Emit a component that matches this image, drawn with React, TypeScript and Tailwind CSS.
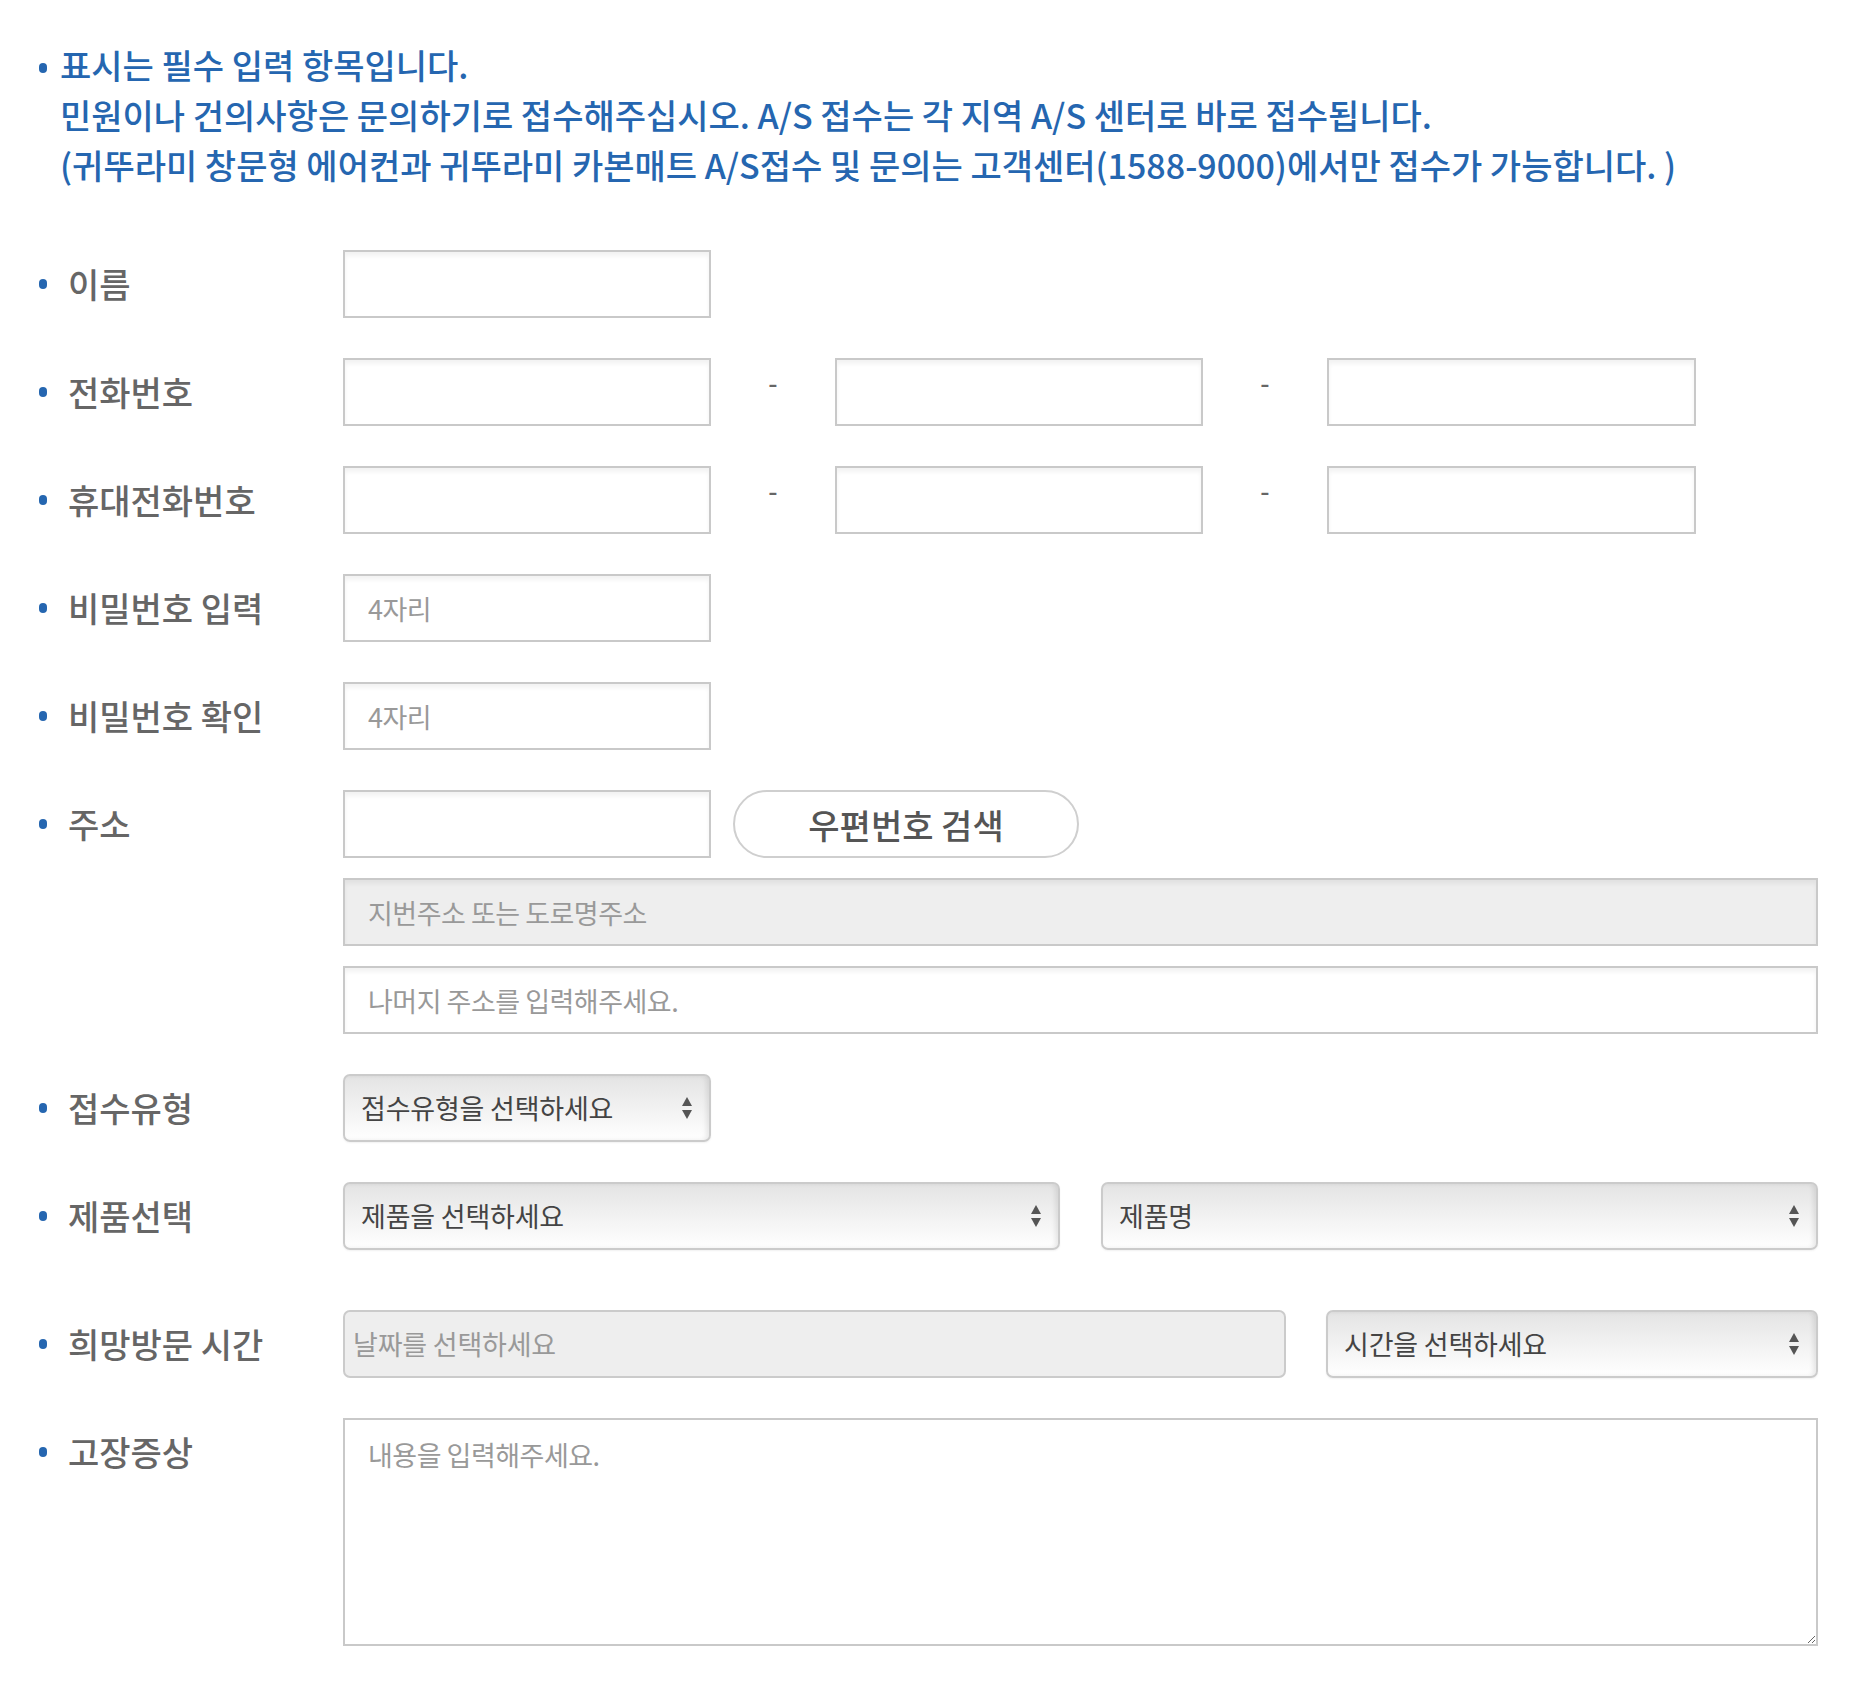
import React from 'react';

const labelDot = 'inline-block w-[8px] h-[10px] rounded-full bg-[#2566b0] shrink-0';
const inputBase =
    'h-[68px] border-2 border-[#c9c9c9] px-[23px] text-[27px] tracking-[-0.5px] text-[#444] placeholder:text-[#999] shadow-[inset_0_4px_4px_rgba(0,0,0,0.05)] outline-none';
const selectBase =
    'relative h-[68px] rounded-[7px] border-2 border-[#cbcbcb] bg-linear-to-b from-[#e4e4e4] to-[#ffffff] shadow-[inset_-3px_0_4px_rgba(0,0,0,0.08),0_1px_2px_rgba(0,0,0,0.06)]';

const Arrows = () => (
    <svg className="absolute right-[16px] top-1/2 -translate-y-1/2" width="12" height="26" viewBox="0 0 12 26">
        <path d="M6 2 L11 11 L1 11 Z" fill="#555" />
        <path d="M1 15 L11 15 L6 24 Z" fill="#555" />
    </svg>
);

const FakeSelect = ({ text, className }: { text: string; className: string }) => (
    <div className={`${selectBase} ${className}`}>
        <div className="flex h-full items-center pl-[16px] text-[27px] tracking-[-0.2px] text-[#444]">{text}</div>
        <Arrows />
    </div>
);

const Row = ({ label, children, top }: { label: string; children: React.ReactNode; top?: boolean }) => (
    <div className={`flex ${top ? 'items-start' : 'items-center'}`}>
        <div className={`w-[304px] shrink-0 flex items-center ${top ? 'h-[68px]' : ''}`}>
            <span className={labelDot} />
            <span className="ml-[21px] text-[34px] font-medium text-[#666] leading-none">{label}</span>
        </div>
        {children}
    </div>
);

const Dash = () => (
    <div className="w-[124px] shrink-0 flex justify-center -mt-[22px] text-[26px] font-medium text-[#666]">-</div>
);

export default function App() {
    return (
        <div className="min-h-[1682px] w-full bg-white pl-[39px] pt-[40px] pb-[36px] font-['Noto_Sans_CJK_KR','Noto_Sans',sans-serif]">
            <div className="flex text-[34px] font-medium leading-[50px] text-[#2566b0]">
                <div className="w-[21px] shrink-0 h-[50px] flex items-center pt-[6px]">
                    <span className={labelDot} />
                </div>
                <div>
                    <p>표시는 필수 입력 항목입니다.</p>
                    <p>민원이나 건의사항은 문의하기로 접수해주십시오. A/S 접수는 각 지역 A/S 센터로 바로 접수됩니다.</p>
                    <p>(귀뚜라미 창문형 에어컨과 귀뚜라미 카본매트 A/S접수 및 문의는 고객센터(1588-9000)에서만 접수가 가능합니다. )</p>
                </div>
            </div>

            <div className="mt-[60px] flex flex-col gap-[40px]">
                <Row label="이름">
                    <input className={`${inputBase} bg-white w-[368px]`} />
                </Row>
                <Row label="전화번호">
                    <input className={`${inputBase} bg-white w-[368px]`} />
                    <Dash />
                    <input className={`${inputBase} bg-white w-[368px]`} />
                    <Dash />
                    <input className={`${inputBase} bg-white w-[369px]`} />
                </Row>
                <Row label="휴대전화번호">
                    <input className={`${inputBase} bg-white w-[368px]`} />
                    <Dash />
                    <input className={`${inputBase} bg-white w-[368px]`} />
                    <Dash />
                    <input className={`${inputBase} bg-white w-[369px]`} />
                </Row>
                <Row label="비밀번호 입력">
                    <input className={`${inputBase} bg-white w-[368px]`} placeholder="4자리" />
                </Row>
                <Row label="비밀번호 확인">
                    <input className={`${inputBase} bg-white w-[368px]`} placeholder="4자리" />
                </Row>
                <Row label="주소" top>
                    <div className="flex flex-col gap-[20px]">
                        <div className="flex items-center">
                            <input className={`${inputBase} bg-white w-[368px]`} />
                            <button className="ml-[22px] h-[68px] w-[346px] rounded-full border-2 border-[#cfcfcf] bg-white text-[34px] font-medium text-[#555]">
                                우편번호 검색
                            </button>
                        </div>
                        <input
                            className={`${inputBase} w-[1475px] bg-[#eeeeee]`}
                            placeholder="지번주소 또는 도로명주소"
                            readOnly
                        />
                        <input className={`${inputBase} bg-white w-[1475px]`} placeholder="나머지 주소를 입력해주세요." />
                    </div>
                </Row>
                <Row label="접수유형">
                    <FakeSelect text="접수유형을 선택하세요" className="w-[368px]" />
                </Row>
                <Row label="제품선택">
                    <div className="flex w-[1475px] gap-[41px]">
                        <FakeSelect text="제품을 선택하세요" className="flex-1" />
                        <FakeSelect text="제품명" className="flex-1" />
                    </div>
                </Row>
                <div className="mt-[20px]">
                    <Row label="희망방문 시간">
                        <div className="flex w-[1475px] gap-[40px]">
                            <div className="h-[68px] w-[943px] rounded-[7px] border-2 border-[#cbcbcb] bg-[#eeeeee] flex items-center pl-[8px] text-[27px] tracking-[-0.2px] text-[#999]">
                                날짜를 선택하세요
                            </div>
                            <FakeSelect text="시간을 선택하세요" className="flex-1" />
                        </div>
                    </Row>
                </div>
                <Row label="고장증상" top>
                    <textarea
                        className="h-[228px] w-[1475px] border-2 border-[#c9c9c9] bg-white px-[23px] py-[14px] text-[27px] leading-[42px] tracking-[-0.5px] text-[#444] placeholder:text-[#999] outline-none"
                        placeholder="내용을 입력해주세요."
                    />
                </Row>
            </div>
        </div>
    );
}
